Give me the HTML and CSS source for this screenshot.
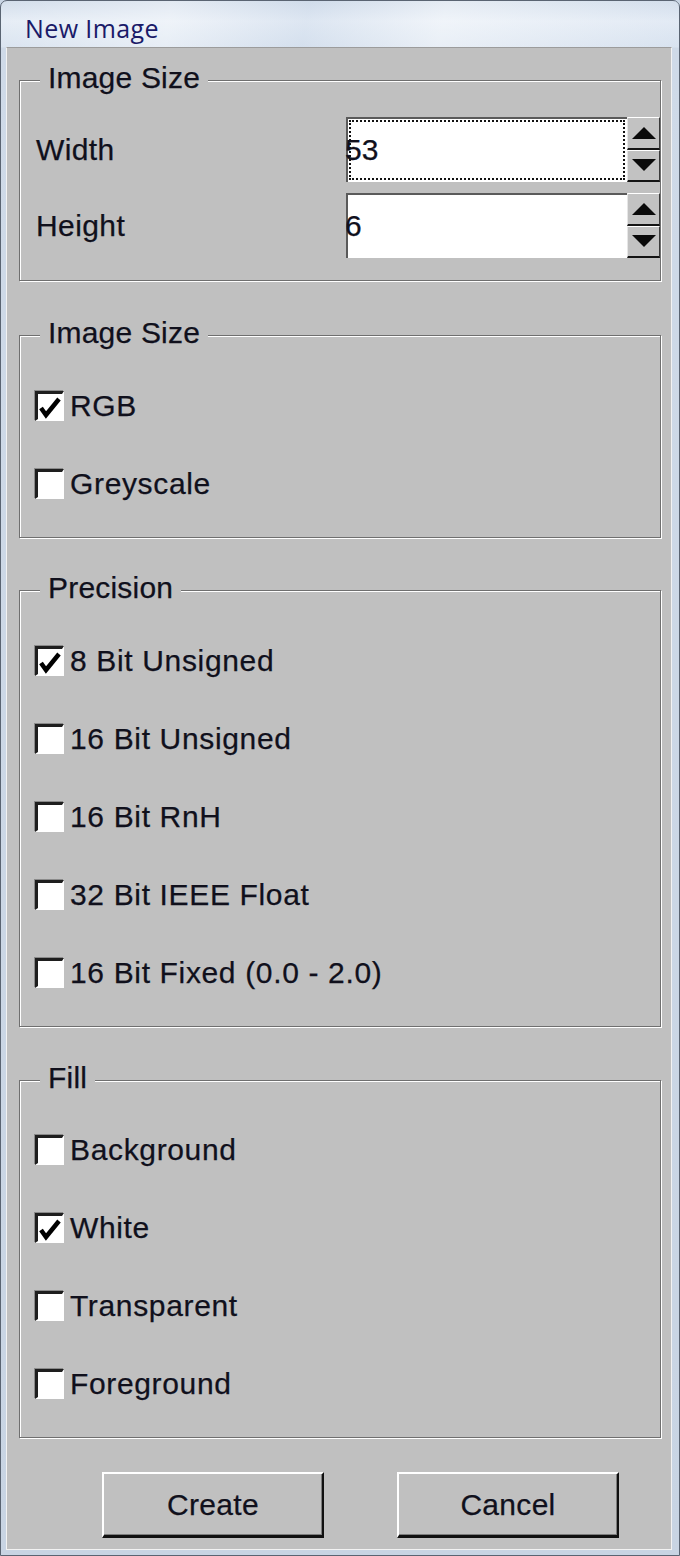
FILE: index.html
```html
<!DOCTYPE html>
<html>
<head>
<meta charset="utf-8">
<title>New Image</title>
<link rel="stylesheet" href="styles.css">
</head>
<body>
<div class="window">
  <div class="titlebar"><span class="title">New Image</span></div>
  <div class="client">
    <div class="group group-size">
      <div class="legend">Image Size</div>
      <div class="field-row">
        <span class="label">Width</span>
        <div class="spin">
          <div class="spin-input"><div class="focus-rect"><span class="value">53</span></div></div>
          <div class="spin-buttons">
            <div class="spin-btn"><svg class="tri" viewBox="0 0 24 12" width="24" height="12"><polygon points="12,0 24,12 0,12"/></svg></div>
            <div class="spin-btn"><svg class="tri" viewBox="0 0 24 12" width="24" height="12"><polygon points="0,0 24,0 12,12"/></svg></div>
          </div>
        </div>
      </div>
      <div class="field-row">
        <span class="label">Height</span>
        <div class="spin">
          <div class="spin-input"><div class="plain-rect"><span class="value">6</span></div></div>
          <div class="spin-buttons">
            <div class="spin-btn"><svg class="tri" viewBox="0 0 24 12" width="24" height="12"><polygon points="12,0 24,12 0,12"/></svg></div>
            <div class="spin-btn"><svg class="tri" viewBox="0 0 24 12" width="24" height="12"><polygon points="0,0 24,0 12,12"/></svg></div>
          </div>
        </div>
      </div>
    </div>

    <div class="group group-mode">
      <div class="legend">Image Size</div>
      <div class="check-row"><span class="box"><svg class="tick" viewBox="0 0 24 26" width="24" height="26"><polyline points="3,14 8,21 21,5"/></svg></span><span class="text">RGB</span></div>
      <div class="check-row"><span class="box"></span><span class="text">Greyscale</span></div>
    </div>

    <div class="group group-precision">
      <div class="legend">Precision</div>
      <div class="check-row"><span class="box"><svg class="tick" viewBox="0 0 24 26" width="24" height="26"><polyline points="3,14 8,21 21,5"/></svg></span><span class="text">8 Bit Unsigned</span></div>
      <div class="check-row"><span class="box"></span><span class="text">16 Bit Unsigned</span></div>
      <div class="check-row"><span class="box"></span><span class="text">16 Bit RnH</span></div>
      <div class="check-row"><span class="box"></span><span class="text">32 Bit IEEE Float</span></div>
      <div class="check-row"><span class="box"></span><span class="text">16 Bit Fixed (0.0 - 2.0)</span></div>
    </div>

    <div class="group group-fill">
      <div class="legend">Fill</div>
      <div class="check-row"><span class="box"></span><span class="text">Background</span></div>
      <div class="check-row"><span class="box"><svg class="tick" viewBox="0 0 24 26" width="24" height="26"><polyline points="3,14 8,21 21,5"/></svg></span><span class="text">White</span></div>
      <div class="check-row"><span class="box"></span><span class="text">Transparent</span></div>
      <div class="check-row"><span class="box"></span><span class="text">Foreground</span></div>
    </div>

    <div class="buttons">
      <div class="button">Create</div>
      <div class="button">Cancel</div>
    </div>
  </div>
</div>
</body>
</html>
```

FILE: styles.css
```css
html, body {
  margin: 0;
  padding: 0;
  background: #c9d5e4;
}

.window {
  box-sizing: border-box;
  width: 680px;
  height: 1556px;
  display: flex;
  flex-direction: column;
  border: 1px solid #5a6472;
  border-radius: 7px 7px 0 0;
  padding: 0 7px 5px 5px;
  background: linear-gradient(180deg, #d3deeb 0px, #e6edf6 20px, #dae4f0 46px, #cfdae8 47px, #c8d4e3 100%);
  font-family: "Liberation Sans", Arial, sans-serif;
  color: #10101c;
  -webkit-text-stroke: 0.25px #10101c;
}

.titlebar {
  height: 38px;
  padding-top: 8px;
  display: flex;
  align-items: center;
  padding-left: 24px;
  margin: 0 -7px 0 -5px;
  background: linear-gradient(100deg, rgba(255,255,255,0.0) 0%, rgba(255,255,255,0.35) 25%, rgba(200,214,232,0.3) 45%, rgba(255,255,255,0.4) 65%, rgba(210,222,238,0.2) 100%);
}

.title {
  font-family: "Open Sans", "Noto Sans", sans-serif;
  font-size: 25px;
  color: #1a1a68;
  letter-spacing: 0.4px;
  -webkit-text-stroke: 0;
}

.client {
  flex: 1;
  display: flex;
  flex-direction: column;
  background: #c0c0c0;
  border-top: 1px solid #9c9c9c;
  border-left: 1px solid #f2f2f2;
  border-right: 1px solid #f2f2f2;
  border-bottom: 1px solid #f2f2f2;
  padding-top: 32px;
}

.group {
  display: flex;
  flex-direction: column;
  margin: 0 10px 0 12px;
  border: 1px solid #6f6f6f;
  box-shadow: inset 1px 1px 0 #ffffff, 1px 1px 0 #ffffff;
  padding: 0 0 14px 15px;
}

.legend {
  align-self: flex-start;
  font-size: 30px;
  line-height: 34px;
  height: 34px;
  padding: 0 8px;
  margin: -20px 0 17px 5px;
  background: #c0c0c0;
  white-space: nowrap;
  letter-spacing: 0.2px;
}

.group-size {
  padding: 0 0 22px 16px;
}

.group-size .legend {
  margin: -20px 0 22px 4px;
}

.group-mode { margin-top: 54px; }
.group-precision { margin-top: 52px; }
.group-fill { margin-top: 53px; }
.group-fill .legend { margin-bottom: 16px; }

.field-row {
  display: flex;
  align-items: center;
  height: 65px;
}

.field-row + .field-row {
  margin-top: 11px;
}

.label {
  flex: 1;
  font-size: 30px;
  line-height: 34px;
  letter-spacing: 0.4px;
}

.spin {
  display: flex;
  width: 314px;
  height: 65px;
}

.spin-input {
  flex: 1;
  box-sizing: border-box;
  background: #ffffff;
  border-top: 2px solid #5a5a5a;
  border-left: 2px solid #5a5a5a;
  padding: 1px 2px 2px 1px;
  display: flex;
}

.focus-rect,
.plain-rect {
  flex: 1;
  box-sizing: border-box;
  display: flex;
  align-items: center;
}

.focus-rect {
  border: 2px dotted #111;
}

.plain-rect {
  border: 2px solid transparent;
}

.value {
  font-size: 30px;
  line-height: 34px;
  margin-left: -6px;
  color: #10101c;
}

.spin-buttons {
  width: 33px;
  display: flex;
  flex-direction: column;
}

.spin-btn {
  flex: 1;
  box-sizing: border-box;
  background: #c2c2c2;
  border-top: 1px solid #ffffff;
  border-left: 1px solid #e6e6e6;
  border-right: 1px solid #3a3a3a;
  border-bottom: 2px solid #141414;
  display: flex;
  align-items: center;
  justify-content: center;
}

.tri {
  display: block;
  fill: #0a0a0a;
}

.check-row {
  display: flex;
  align-items: center;
  height: 78px;
}

.box {
  box-sizing: border-box;
  width: 29px;
  height: 30px;
  background: #ffffff;
  border-top: 3px solid #1e1e1e;
  border-left: 3px solid #1e1e1e;
  border-right: 2px solid #ffffff;
  border-bottom: 2px solid #ffffff;
  box-shadow: -1px -1px 0 #8a8a8a;
  display: flex;
  align-items: center;
  justify-content: center;
  margin-right: 6px;
}

.tick {
  display: block;
  fill: none;
  stroke: #000;
  stroke-width: 4.5;
  stroke-linejoin: miter;
  stroke-linecap: butt;
}

.text {
  font-size: 30px;
  line-height: 34px;
  white-space: nowrap;
  letter-spacing: 0.65px;
}

.buttons {
  display: flex;
  gap: 73px;
  padding-left: 95px;
  margin-top: 34px;
}

.button {
  box-sizing: border-box;
  width: 222px;
  height: 66px;
  background: #c0c0c0;
  border-top: 2px solid #ffffff;
  border-left: 2px solid #ffffff;
  border-right: 2px solid #101010;
  border-bottom: 3px solid #101010;
  box-shadow: inset -1px -1px 0 #7c7c7c;
  display: flex;
  align-items: center;
  justify-content: center;
  font-size: 30px;
  line-height: 34px;
  color: #10101c;
  letter-spacing: 0.3px;
}
```
